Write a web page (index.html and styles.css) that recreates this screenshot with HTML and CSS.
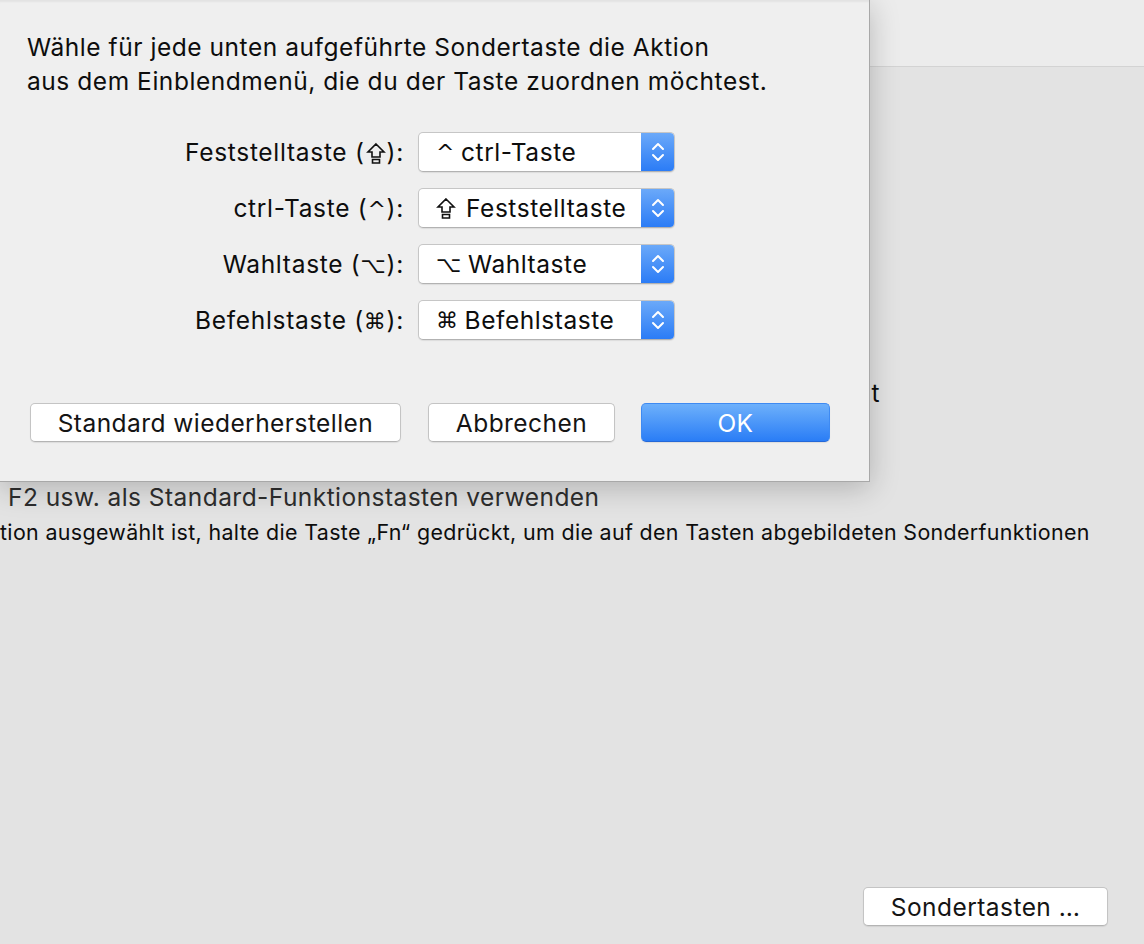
FILE: index.html
```html
<!DOCTYPE html>
<html lang="de">
<head>
<meta charset="utf-8">
<link rel="stylesheet" href="styles.css">
</head>
<body>
<div class="window">
  <div class="toolbar"></div>
  <div class="content">
    <div class="line-t">Tastaturbeleuchtung ausschalten nach 5 Sek. Inaktivität</div>
    <div class="line-f">F2 usw. als Standard-Funktionstasten verwenden</div>
    <div class="line-help">tion ausgewählt ist, halte die Taste „Fn“ gedrückt, um die auf den Tasten abgebildeten Sonderfunktionen</div>
    <div class="content-foot">
      <button class="btn btn-sonder">Sondertasten …</button>
    </div>
  </div>

  <div class="sheet">
    <p class="intro">Wähle für jede unten aufgeführte Sondertaste die Aktion<br>aus dem Einblendmenü, die du der Taste zuordnen möchtest.</p>
    <div class="form">
      <div class="row">
        <span class="label">Feststelltaste (<svg class="caps" viewBox="0 0 20 24" aria-label="⇪"><path d="M10 3 L18 11 L14 11 L14 16 L6 16 L6 11 L2 11 Z M6.5 18.5 H13.5 V22 H6.5 Z" fill="none" stroke="#111" stroke-width="1.6" stroke-linejoin="miter"/></svg>):</span>
        <div class="popup"><span class="popup-text"><span class="sym">^</span> ctrl-Taste</span><span class="popup-arrows"><svg width="14" height="22" viewBox="0 0 14 22"><path d="M2 8 L7 3 L12 8 M2 14 L7 19 L12 14" fill="none" stroke="#fff" stroke-width="2" stroke-linecap="round" stroke-linejoin="round"/></svg></span></div>
      </div>
      <div class="row">
        <span class="label">ctrl-Taste (<span class="sym">^</span>):</span>
        <div class="popup"><span class="popup-text"><svg class="caps" viewBox="0 0 20 24" aria-label="⇪"><path d="M10 3 L18 11 L14 11 L14 16 L6 16 L6 11 L2 11 Z M6.5 18.5 H13.5 V22 H6.5 Z" fill="none" stroke="#111" stroke-width="1.6" stroke-linejoin="miter"/></svg> Feststelltaste</span><span class="popup-arrows"><svg width="14" height="22" viewBox="0 0 14 22"><path d="M2 8 L7 3 L12 8 M2 14 L7 19 L12 14" fill="none" stroke="#fff" stroke-width="2" stroke-linecap="round" stroke-linejoin="round"/></svg></span></div>
      </div>
      <div class="row">
        <span class="label">Wahltaste (<span class="sym">⌥</span>):</span>
        <div class="popup"><span class="popup-text"><span class="sym">⌥</span> Wahltaste</span><span class="popup-arrows"><svg width="14" height="22" viewBox="0 0 14 22"><path d="M2 8 L7 3 L12 8 M2 14 L7 19 L12 14" fill="none" stroke="#fff" stroke-width="2" stroke-linecap="round" stroke-linejoin="round"/></svg></span></div>
      </div>
      <div class="row">
        <span class="label">Befehlstaste (<span class="sym">⌘</span>):</span>
        <div class="popup"><span class="popup-text"><span class="sym">⌘</span> Befehlstaste</span><span class="popup-arrows"><svg width="14" height="22" viewBox="0 0 14 22"><path d="M2 8 L7 3 L12 8 M2 14 L7 19 L12 14" fill="none" stroke="#fff" stroke-width="2" stroke-linecap="round" stroke-linejoin="round"/></svg></span></div>
      </div>
    </div>
    <div class="actions">
      <button class="btn btn-reset">Standard wiederherstellen</button>
      <button class="btn btn-cancel">Abbrechen</button>
      <button class="btn btn-ok">OK</button>
    </div>
  </div>
</div>
</body>
</html>
```

FILE: styles.css
```css
html, body {
  margin: 0;
  padding: 0;
  width: 1144px;
  height: 944px;
  overflow: hidden;
}
body {
  font-family: Inter, "Noto Sans", "DejaVu Sans", sans-serif;
  color: #0d0d0d;
  background: #e3e3e3;
  letter-spacing: 0.45px;
}
.window {
  position: relative;
  width: 1144px;
  height: 944px;
  display: flex;
  flex-direction: column;
}
.toolbar {
  height: 66px;
  background: #ececec;
  border-bottom: 1px solid #d3d3d3;
  flex: none;
}
.content {
  flex: 1;
  display: flex;
  flex-direction: column;
  background: #e3e3e3;
}
.line-t {
  margin-top: 311px;
  width: 880px;
  text-align: right;
  font-size: 24.5px;
  line-height: 30px;
  white-space: nowrap;
}
.line-f {
  margin-top: 74px;
  padding-left: 8px;
  font-size: 24.5px;
  line-height: 30px;
  color: #2e2e2e;
  white-space: nowrap;
}
.line-help {
  margin-top: 5px;
  font-size: 21.4px;
  letter-spacing: 0.35px;
  line-height: 30px;
  white-space: nowrap;
}
.content-foot {
  margin-top: auto;
  display: flex;
  justify-content: flex-end;
  padding: 0 36px 18px 0;
}
.btn {
  font-family: Inter, "Noto Sans", "DejaVu Sans", sans-serif;
  font-size: 24.5px;
  letter-spacing: 0.45px;
  height: 39px;
  padding: 0;
  background: #fff;
  color: #141414;
  border: 1px solid #c4c4c4;
  border-bottom-color: #b4b4b4;
  border-radius: 5px;
  box-shadow: 0 1px 1px rgba(0,0,0,0.08);
}
.btn-sonder {
  width: 245px;
}

.sheet {
  position: absolute;
  left: 0;
  top: 0;
  width: 870px;
  height: 482px;
  box-sizing: border-box;
  background: #efefef;
  border-right: 1px solid #a8a8a8;
  border-bottom: 1px solid #a8a8a8;
  box-shadow: 0 6px 28px rgba(0,0,0,0.22), inset 0 3px 2px -1px rgba(0,0,0,0.05);
  padding: 30px 0 0 27px;
}
.intro {
  margin: 0;
  font-size: 24.5px;
  letter-spacing: 0.55px;
  line-height: 34px;
}
.form {
  margin-top: 34px;
  display: flex;
  flex-direction: column;
  gap: 16px;
}
.row {
  display: flex;
  align-items: center;
  gap: 14px;
}
.label {
  width: 377px;
  text-align: right;
  font-size: 24.5px;
  letter-spacing: 0.7px;
  white-space: nowrap;
}
.sym {
  font-family: "DejaVu Sans", sans-serif;
  font-size: 0.9em;
}
.caps {
  width: 20px;
  height: 24px;
  vertical-align: -4px;
  margin: 0 1px;
}
.popup-text .caps {
  vertical-align: 0;
  margin: 0 4px 0 0;
}
.popup {
  width: 257px;
  height: 40px;
  box-sizing: border-box;
  display: flex;
  align-items: stretch;
  background: #fff;
  border: 1px solid #c6c6c6;
  border-bottom-color: #b2b2b2;
  border-radius: 5px;
  box-shadow: 0 1px 1px rgba(0,0,0,0.08);
  overflow: hidden;
}
.popup-text {
  flex: 1;
  display: flex;
  align-items: center;
  gap: 6px;
  padding-left: 17px;
  font-size: 24.5px;
  letter-spacing: 0.55px;
  white-space: nowrap;
}
.popup-arrows {
  width: 33px;
  display: flex;
  align-items: center;
  justify-content: center;
  background: linear-gradient(#6ba9f9, #2b7cf6);
}
.actions {
  margin-top: 63px;
  display: flex;
  padding-left: 3px;
}
.btn-reset {
  width: 371px;
}
.btn-cancel {
  width: 187px;
  margin-left: 27px;
}
.btn-ok {
  width: 189px;
  margin-left: 26px;
  color: #fff;
  background: linear-gradient(#6db0fb, #2a7df6);
  border: 1px solid #3e8af2;
  border-bottom-color: #2468d8;
}
```
